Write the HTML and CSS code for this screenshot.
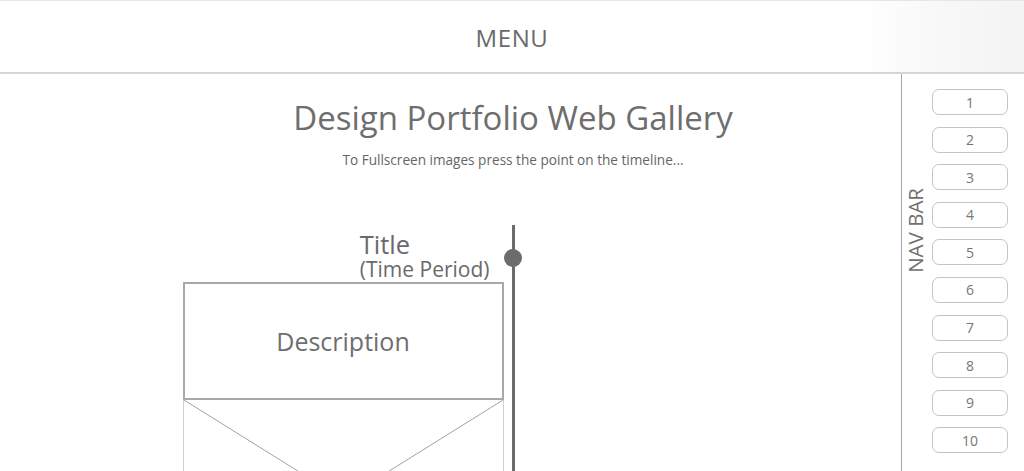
FILE: index.html
```html
<!DOCTYPE html>
<html lang="en">
<head>
<meta charset="utf-8">
<title>Design Portfolio Web Gallery</title>
<link rel="stylesheet" href="styles.css">
</head>
<body>
<header class="menu-bar">
  <span class="menu-label">MENU</span>
</header>
<div class="layout">
  <main class="content">
    <h1 class="page-title">Design Portfolio Web Gallery</h1>
    <p class="hint">To Fullscreen images press the point on the timeline...</p>
    <section class="timeline">
      <div class="entry">
        <div class="entry-head">
          <div class="entry-title">Title</div>
          <div class="entry-period">(Time Period)</div>
        </div>
        <div class="card">
          <div class="card-desc">Description</div>
          <div class="card-image">
            <svg class="placeholder" viewBox="0 0 320 200" preserveAspectRatio="none">
              <line x1="0" y1="0" x2="320" y2="200"/>
              <line x1="320" y1="0" x2="0" y2="200"/>
            </svg>
          </div>
        </div>
      </div>
      <div class="axis"><span class="dot"></span></div>
      <div class="spacer"></div>
    </section>
  </main>
  <aside class="nav">
    <div class="nav-label">NAV BAR</div>
    <ul class="nav-list">
      <li class="nav-btn">1</li>
      <li class="nav-btn">2</li>
      <li class="nav-btn">3</li>
      <li class="nav-btn">4</li>
      <li class="nav-btn">5</li>
      <li class="nav-btn">6</li>
      <li class="nav-btn">7</li>
      <li class="nav-btn">8</li>
      <li class="nav-btn">9</li>
      <li class="nav-btn">10</li>
    </ul>
  </aside>
</div>
</body>
</html>
```
FILE: styles.css
```css
* { box-sizing: border-box; }
html, body { margin: 0; padding: 0; }
body {
  width: 1024px;
  height: 471px;
  overflow: hidden;
  background: #fff;
  font-family: "Open Sans", "Noto Sans", sans-serif;
  color: #6f6f6f;
}
.menu-bar {
  height: 74px;
  border-top: 1px solid #e6e6e6;
  border-bottom: 2px solid #d6d6d6;
  display: flex;
  align-items: center;
  justify-content: center;
  background: linear-gradient(to right, #fff 0, #fff 860px, #fbfbfb 900px, #f3f3f3 1024px);
}
.menu-label {
  font-size: 24px;
  font-weight: 400;
  color: #6a6a6a;
  letter-spacing: 0.6px;
  padding-top: 2px;
}
.layout {
  display: flex;
  height: 397px;
  overflow: hidden;
}
.content {
  flex: 1;
  padding-left: 125px;
  display: flex;
  flex-direction: column;
  align-items: stretch;
}
.page-title {
  margin: 20px 0 0;
  text-align: center;
  font-size: 33px;
  font-weight: 400;
  line-height: 48px;
  color: #6e6e6e;
}
.hint {
  margin: 9px 0 0;
  text-align: center;
  font-size: 13.6px;
  line-height: 18px;
  color: #666;
}
.timeline {
  margin-top: 56px;
  flex: 1;
  display: grid;
  grid-template-columns: 1fr 3px 1fr;
}
.entry {
  display: flex;
  flex-direction: column;
  align-items: flex-end;
  padding-right: 8px;
}
.entry-head {
  margin-right: 14px;
  padding-top: 6px;
}
.entry-title {
  font-size: 25.5px;
  line-height: 26px;
  color: #6a6a6a;
}
.entry-period {
  font-size: 21px;
  line-height: 24px;
  color: #6a6a6a;
}
.card {
  margin-top: 1px;
  width: 321px;
}
.card-desc {
  height: 118px;
  border: 2px solid #a8a8a8;
  display: flex;
  align-items: center;
  justify-content: center;
  font-size: 25px;
  color: #6e6e6e;
}
.card-image {
  height: 200px;
  border: 1px solid #d0d0d0;
  border-top: none;
}
.placeholder {
  display: block;
  width: 100%;
  height: 100%;
  stroke: #a0a0a0;
  stroke-width: 1;
}
.axis {
  background: #6c6c6c;
  position: relative;
}
.dot {
  position: absolute;
  left: -7.5px;
  top: 24px;
  width: 18px;
  height: 18px;
  border-radius: 50%;
  background: #6c6c6c;
}
.nav {
  width: 123px;
  border-left: 1px solid #a8a8a8;
  display: flex;
  align-items: flex-start;
}
.nav-label {
  writing-mode: vertical-rl;
  transform: rotate(180deg);
  font-size: 20.5px;
  line-height: 24px;
  color: #707070;
  margin: 114px 0 0 1px;
  width: 24px;
  white-space: nowrap;
}
.nav-list {
  list-style: none;
  margin: 15px 0 0 5px;
  padding: 0;
  display: flex;
  flex-direction: column;
  gap: 11.6px;
}
.nav-btn {
  width: 76px;
  height: 26px;
  border: 1px solid #c4c4c4;
  border-radius: 7px;
  display: flex;
  align-items: center;
  justify-content: center;
  font-size: 14px;
  color: #767676;
}
```
